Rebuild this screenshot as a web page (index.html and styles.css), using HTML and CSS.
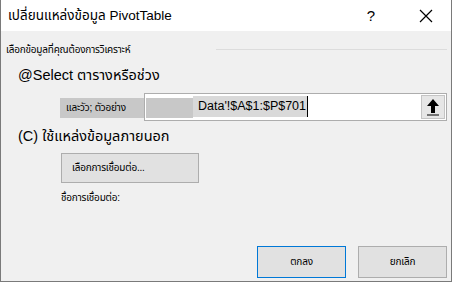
FILE: index.html
```html
<!DOCTYPE html>
<html lang="th">
<head>
    <meta charset="UTF-8">
    <title>เปลี่ยนแหล่งข้อมูล PivotTable</title>
    <link rel="stylesheet" href="styles.css">
</head>
<body>
    <div class="dialog">
        <div class="titlebar">
            <span class="title">เปลี่ยนแหล่งข้อมูล PivotTable</span>
            <span class="help">?</span>
            <svg class="close" width="14" height="14" viewBox="0 0 14 14">
                <path d="M1 1 L13 13 M13 1 L1 13" stroke="#000" stroke-width="1.2" fill="none"/>
            </svg>
        </div>

        <div class="content">
            <div class="group-head">
                <span class="small">เลือกข้อมูลที่คุณต้องการวิเคราะห์</span>
                <span class="group-line"></span>
            </div>

            <div class="option">@Select ตารางหรือช่วง</div>

            <div class="range-row">
                <span class="range-label small">และวัว; ตัวอย่าง</span>
                <div class="range-box">
                    <span class="range-fill"></span>
                    <span class="range-text">Data'!$A$1:$P$701</span>
                    <span class="caret"></span>
                    <span class="collapse">
                        <svg width="14" height="18" viewBox="0 0 14 18">
                            <path d="M7 1 L1 8 H5 V15 H9 V8 H13 Z" fill="#000"/>
                            <path d="M1 17 H13" stroke="#000" stroke-width="1"/>
                        </svg>
                    </span>
                </div>
            </div>

            <div class="option external">(C) ใช้แหล่งข้อมูลภายนอก</div>

            <button class="btn choose small">เลือกการเชื่อมต่อ...</button>

            <div class="conn-name small">ชื่อการเชื่อมต่อ:</div>

            <div class="actions">
                <button class="btn action default small">ตกลง</button>
                <button class="btn action small">ยกเลิก</button>
            </div>
        </div>
    </div>
</body>
</html>
```

FILE: styles.css
```css
body {
    margin: 0;
    font-family: 'Liberation Sans', 'Noto Sans Thai', 'Noto Sans', sans-serif;
    color: #000000;
    background-color: #ffffff;
}

.dialog {
    width: 452px;
    height: 282px;
    box-sizing: border-box;
    border: 1px solid #7a7a7a;
    border-top: none;
    display: flex;
    flex-direction: column;
    overflow: hidden;
}

.titlebar {
    height: 31px;
    flex: none;
    background-color: #ffffff;
    display: flex;
    align-items: center;
    padding-left: 7px;
}

.title {
    font-size: 13.5px;
    flex: 1;
}

.help {
    font-size: 15px;
    margin-right: 44px;
}

.close {
    margin-right: 18px;
}

.content {
    flex: 1;
    background-color: #f0f0f0;
    display: flex;
    flex-direction: column;
    padding: 0 4px 0 5px;
}

.small {
    font-size: 10px;
    letter-spacing: -0.2px;
}

.group-head {
    display: flex;
    align-items: center;
    margin-top: 11px;
    height: 15px;
}

.group-line {
    flex: 1;
    height: 1px;
    background-color: #dcdcdc;
    margin-left: 86px;
}

.option {
    font-size: 14.5px;
    margin: 7px 0 0 12px;
    height: 22px;
    line-height: 22px;
}

.range-row {
    display: flex;
    align-items: center;
    margin: 7px 0 0 54px;
    height: 28px;
}

.range-label {
    background-color: #c8c8c8;
    width: 78px;
    height: 20px;
    line-height: 20px;
    padding-left: 6px;
    margin-top: 2px;
}

.range-box {
    flex: 1;
    height: 28px;
    box-sizing: border-box;
    border: 1px solid #adadad;
    background-color: #ffffff;
    display: flex;
    align-items: center;
    padding-left: 1px;
}

.range-fill {
    width: 47px;
    height: 20px;
    margin-top: 2px;
    background-color: #c8c8c8;
}

.range-text {
    font-size: 12.5px;
    background-color: #d9d9d9;
    height: 21px;
    line-height: 21px;
    padding: 0 1px 0 5px;
    margin-top: -2px;
}

.caret {
    width: 1px;
    height: 21px;
    background-color: #000000;
    margin-top: -2px;
}

.collapse {
    margin-left: auto;
    width: 24px;
    height: 24px;
    box-sizing: border-box;
    margin-right: 1px;
    border: 1px solid #c4c4c4;
    background-color: #e6e6e6;
    display: flex;
    align-items: center;
    justify-content: center;
}

.external {
    margin-top: 4px;
}

.btn {
    font-family: inherit;
    background-color: #e1e1e1;
    border: 1px solid #adadad;
    color: #000000;
    padding: 0;
}

.choose {
    width: 138px;
    height: 30px;
    margin: 6px 0 0 55px;
    text-align: left;
    padding-left: 10px;
}

.conn-name {
    margin: 7px 0 0 55px;
}

.actions {
    margin-top: auto;
    margin-bottom: 3px;
    display: flex;
    justify-content: flex-end;
    gap: 12px;
}

.action {
    width: 89px;
    height: 32px;
}

.default {
    border: 1px solid #0078d7;
}
```
